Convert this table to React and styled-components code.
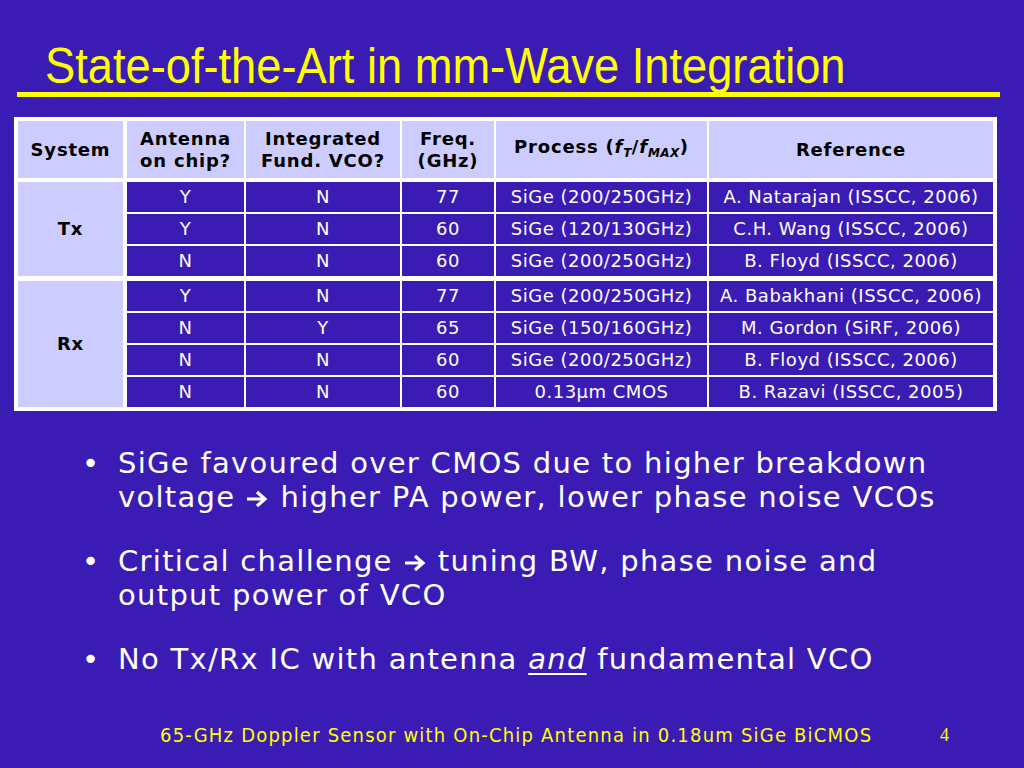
import React from "react";
import styled, { createGlobalStyle } from "styled-components";

const BG = "#3a1cb4";
const LAVENDER = "#ccccff";
const YELLOW = "#ffff00";

const GlobalStyle = createGlobalStyle`
  html, body {
    margin: 0;
    padding: 0;
    background: ${BG};
  }
`;

const Slide = styled.div`
  width: 1024px;
  height: 768px;
  background: ${BG};
  display: flex;
  flex-direction: column;
  overflow: hidden;
`;

const Title = styled.h1`
  margin: 0;
  padding: 40px 0 0 45px;
  height: 52px;
  font-family: "Liberation Sans", Arial, sans-serif;
  font-weight: normal;
  font-size: 50px;
  line-height: 52px;
  color: ${YELLOW};
  white-space: nowrap;
`;

const Squeeze = styled.span`
  display: inline-block;
  transform: scaleX(0.905);
  transform-origin: left center;
`;

const Rule = styled.div`
  height: 5px;
  margin: 0 24px 0 17px;
  background: ${YELLOW};
`;

const Table = styled.div`
  margin: 20px 0 0 14px;
  width: 983px;
  box-sizing: border-box;
  padding: 4px;
  background: #ffffff;
  display: grid;
  grid-template-columns: 107px 117px 154px 92px 211px 284px;
  grid-template-rows: 59px repeat(2, 30px) 33px repeat(4, 30px);
  gap: 2px;
  font-family: "DejaVu Sans", Verdana, sans-serif;
  font-size: 18px;
`;

const Cell = styled.div`
  display: flex;
  align-items: center;
  justify-content: center;
  text-align: center;
  box-sizing: border-box;
  line-height: 22px;
  letter-spacing: ${(p) => (p.$head ? "0.8px" : "0.5px")};
  background: ${(p) => (p.$head ? LAVENDER : BG)};
  color: ${(p) => (p.$head ? "#000" : "#fff")};
  font-weight: ${(p) => (p.$head ? "bold" : "normal")};
  border-bottom: ${(p) => (p.$gap ? `${p.$gap}px solid #fff` : "none")};
  border-right: ${(p) => (p.$side ? "2px solid #fff" : "none")};
  grid-row: ${(p) => (p.$span ? `span ${p.$span}` : "auto")};
`;

const Sub = styled.sub`
  font-size: 12px;
  vertical-align: -4px;
  font-style: italic;
  letter-spacing: 0.5px;
`;

const Bullets = styled.ul`
  list-style: none;
  margin: 35px 0 0 0;
  padding: 0 66px 0 82px;
  display: flex;
  flex-direction: column;
  gap: 30px;
  font-family: "DejaVu Sans", Verdana, sans-serif;
  font-size: 29px;
  letter-spacing: 1.3px;
  line-height: 34px;
  color: #fff;
`;

const Bullet = styled.li`
  display: grid;
  grid-template-columns: 36px 1fr;
  &::before {
    content: "•";
  }
`;

const Arrow = () => (
  <svg width="24" height="20" viewBox="0 0 24 20" style={{ margin: "0 11px 0 10px", verticalAlign: "-2px" }}>
    <path d="M2 10 H20 M12 3 L20 10 L12 17" stroke="#fff" strokeWidth="3.2" fill="none" />
  </svg>
);

const Em = styled.span`
  font-style: italic;
  text-decoration: underline;
  text-underline-offset: 4px;
`;

const Footer = styled.div`
  margin-top: auto;
  height: 44px;
  display: flex;
  align-items: flex-start;
  color: ${YELLOW};
  padding-left: 160px;
`;

const FootText = styled.span`
  font-family: "DejaVu Sans Condensed", "DejaVu Sans", sans-serif;
  font-size: 20px;
  letter-spacing: 1.2px;
  line-height: 22px;
  width: 780px;
  white-space: nowrap;
`;

const PageNum = styled.span`
  font-family: "Liberation Serif", serif;
  font-size: 18px;
  line-height: 22px;
`;

const rows = [
  ["Y", "N", "77", "SiGe (200/250GHz)", "A. Natarajan (ISSCC, 2006)"],
  ["Y", "N", "60", "SiGe (120/130GHz)", "C.H. Wang (ISSCC, 2006)"],
  ["N", "N", "60", "SiGe (200/250GHz)", "B. Floyd (ISSCC, 2006)"],
  ["Y", "N", "77", "SiGe (200/250GHz)", "A. Babakhani (ISSCC, 2006)"],
  ["N", "Y", "65", "SiGe (150/160GHz)", "M. Gordon (SiRF, 2006)"],
  ["N", "N", "60", "SiGe (200/250GHz)", "B. Floyd (ISSCC, 2006)"],
  ["N", "N", "60", "0.13µm CMOS", "B. Razavi (ISSCC, 2005)"],
];

export default function App() {
  return (
    <>
      <GlobalStyle />
      <Slide>
        <Title>
          <Squeeze>State-of-the-Art in mm-Wave Integration</Squeeze>
        </Title>
        <Rule />
        <Table>
          <Cell $head $side $gap={2}>System</Cell>
          <Cell $head $gap={2}>Antenna<br />on chip?</Cell>
          <Cell $head $gap={2}>Integrated<br />Fund. VCO?</Cell>
          <Cell $head $gap={2}>Freq.<br />(GHz)</Cell>
          <Cell $head $gap={2}>
            <span>
              Process (<i>f</i><Sub>T</Sub>/<i>f</i><Sub>MAX</Sub>)
            </span>
          </Cell>
          <Cell $head $gap={2}>Reference</Cell>
          {rows.map((r, i) => (
            <React.Fragment key={i}>
              {i === 0 && <Cell $head $side $span={3} $gap={3}>Tx</Cell>}
              {i === 3 && <Cell $head $side $span={4}>Rx</Cell>}
              {r.map((v, j) => (
                <Cell key={j} $gap={i === 2 ? 3 : 0}>{v}</Cell>
              ))}
            </React.Fragment>
          ))}
        </Table>
        <Bullets>
          <Bullet>
            <span>
              SiGe favoured over CMOS due to higher breakdown voltage<Arrow />higher PA power, lower phase noise VCOs
            </span>
          </Bullet>
          <Bullet>
            <span>
              Critical challenge<Arrow />tuning BW, phase noise and output power of VCO
            </span>
          </Bullet>
          <Bullet>
            <span>
              No Tx/Rx IC with antenna <Em>and</Em> fundamental VCO
            </span>
          </Bullet>
        </Bullets>
        <Footer>
          <FootText>65-GHz Doppler Sensor with On-Chip Antenna in 0.18um SiGe BiCMOS</FootText>
          <PageNum>4</PageNum>
        </Footer>
      </Slide>
    </>
  );
}
